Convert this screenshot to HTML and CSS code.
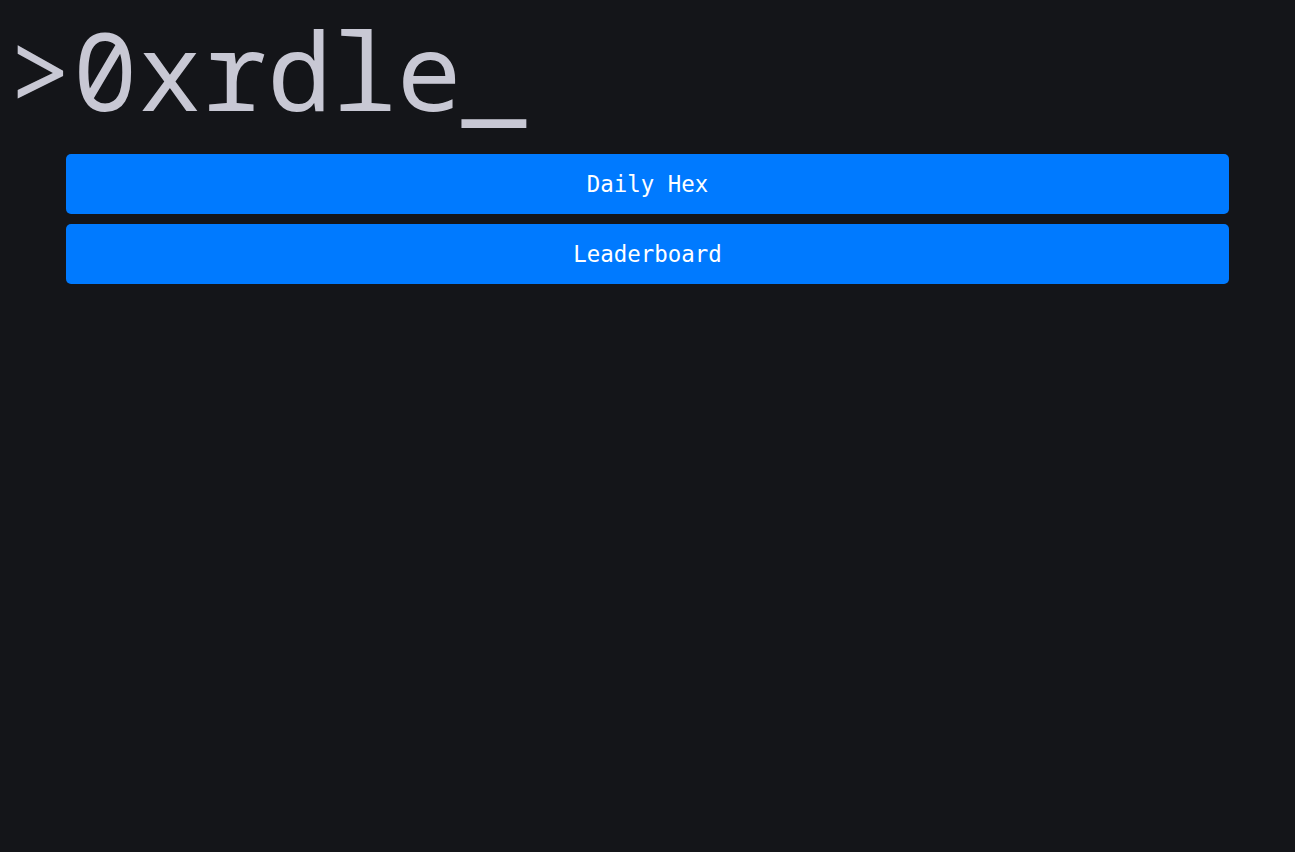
FILE: index.html
```html
<!DOCTYPE html>
<html lang="en">
<head>
<meta charset="utf-8">
<title>0xrdle</title>
<link rel="stylesheet" href="styles.css">
</head>
<body>
<h1 class="logo">&gt;0xrdle_</h1>
<nav class="menu">
  <button class="menu-btn">Daily Hex</button>
  <button class="menu-btn">Leaderboard</button>
</nav>
</body>
</html>
```
FILE: styles.css
```css
html, body {
  background: #141519;
}
body {
  margin: 0;
  padding: 0 8px 8px;
  font-family: "DejaVu Sans Mono", monospace;
}
.logo {
  margin: -4px 0 0 0;
  font-family: "Noto Sans Mono", "DejaVu Sans Mono", monospace;
  font-size: 108px;
  font-weight: normal;
  color: #c8c8d4;
  line-height: normal;
}
.menu {
  display: flex;
  flex-direction: column;
  gap: 10px;
  margin: 11px 58px 0 58px;
}
.menu-btn {
  height: 60px;
  border: none;
  border-radius: 5px;
  background: #007aff;
  color: #ffffff;
  font-family: "DejaVu Sans Mono", monospace;
  font-size: 22.4px;
  cursor: pointer;
}
```
